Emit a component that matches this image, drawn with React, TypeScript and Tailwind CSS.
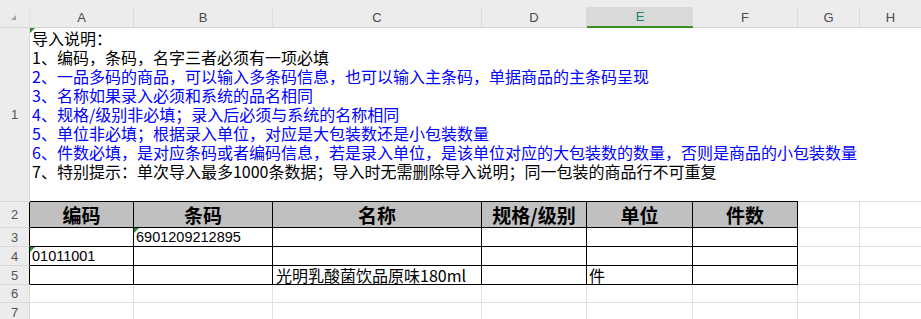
import React from "react";

const COLS = "grid grid-cols-[30px_104px_139px_209px_105px_106px_105px_62px_62px]";
const CJK = "font-['Noto_Sans_CJK_SC',sans-serif]";

function Tri() {
  return (
    <span className="absolute left-0 top-0 h-0 w-0 border-t-[5px] border-r-[5px] border-t-[#2b8a2b] border-r-transparent" />
  );
}

type C = { t?: React.ReactNode; table?: boolean; cls?: string; tri?: boolean };

function Row({
  num,
  h,
  cells,
  blackHead,
}: {
  num: number;
  h: string;
  cells: C[];
  blackHead?: boolean;
}) {
  return (
    <div className={`${COLS} ${h} grid-rows-1`}>
      <div
        className={`flex min-h-0 items-center justify-center bg-[#ececec] border-b border-r border-b-[#d9d9d9] text-[13px] leading-none text-[#555] ${
          blackHead ? "border-r-black" : "border-r-[#d9d9d9]"
        }`}
      >
        {num}
      </div>
      {cells.map((c, i) => (
        <div
          key={i}
          className={`relative flex min-h-0 items-center whitespace-nowrap leading-none border-r border-b ${
            c.table ? "border-r-black border-b-black" : "border-r-[#e1e1e1] border-b-[#e1e1e1]"
          } ${c.cls ?? ""}`}
        >
          {c.tri && <Tri />}
          {c.t}
        </div>
      ))}
    </div>
  );
}

const lines: { t: string; blue?: boolean }[] = [
  { t: "导入说明：" },
  { t: "1、编码，条码，名字三者必须有一项必填" },
  { t: "2、一品多码的商品，可以输入多条码信息，也可以输入主条码，单据商品的主条码呈现", blue: true },
  { t: "3、名称如果录入必须和系统的品名相同", blue: true },
  { t: "4、规格/级别非必填；录入后必须与系统的名称相同", blue: true },
  { t: "5、单位非必填；根据录入单位，对应是大包装数还是小包装数量", blue: true },
  { t: "6、件数必填，是对应条码或者编码信息，若是录入单位，是该单位对应的大包装数的数量，否则是商品的小包装数量", blue: true },
  { t: "7、特别提示：单次导入最多1000条数据；导入时无需删除导入说明；同一包装的商品行不可重复" },
];

export default function App() {
  const letters = ["A", "B", "C", "D", "E", "F", "G", "H"];
  const empty = (n: number, table: boolean): C[] => Array.from({ length: n }, () => ({ table }));
  const hdr = (t: string): C => ({
    t,
    table: true,
    cls: `justify-center bg-[#c0c0c0] text-[19px] font-bold text-black ${CJK}`,
  });
  return (
    <div className="h-[319px] w-[921px] overflow-hidden bg-white font-['Liberation_Sans',sans-serif]">
      <div className="h-[7px] bg-[#ececec]" />
      <div className={`${COLS} h-[21px] bg-[#ececec]`}>
        <div className="relative border-b border-r border-b-[#d3d3d3] border-r-[#e3e3e3]">
          <span className="absolute left-[11px] top-[8px] h-0 w-0 border-b-[5px] border-l-[5px] border-b-[#a6a6a6] border-l-transparent" />
        </div>
        {letters.map((l) =>
          l === "E" ? (
            <div
              key={l}
              className="flex items-center justify-center border-b-2 border-b-[#3b8f24] bg-[#d9d9d9] text-[13px] leading-none text-[#1d7f70]"
            >
              {l}
            </div>
          ) : (
            <div
              key={l}
              className="flex items-center justify-center border-b border-r border-b-[#d3d3d3] border-r-[#d9d9d9] text-[13px] leading-none text-[#4a4a4a]"
            >
              {l}
            </div>
          )
        )}
      </div>
      <div className={`${COLS} h-[174px] grid-rows-[173px_1px]`}>
        <div className="row-span-2 flex items-center justify-center border-b border-r border-[#d9d9d9] bg-[#ececec] text-[13px] leading-none text-[#555]">
          1
        </div>
        <div className={`relative col-span-8 whitespace-nowrap pl-[2px] pt-[1px] text-[16px] leading-[19px] ${CJK}`}>
          <Tri />
          {lines.map((l, i) => (
            <div key={i} className={`h-[19px] ${l.blue ? "text-[#0000ff]" : "text-black"}`}>
              {l.t}
            </div>
          ))}
        </div>
        <div className="col-span-6 bg-black" />
        <div className="col-span-2 bg-[#e1e1e1]" />
      </div>
      <Row
        num={2}
        h="h-[26px]"
        blackHead
        cells={[hdr("编码"), hdr("条码"), hdr("名称"), hdr("规格/级别"), hdr("单位"), hdr("件数"), ...empty(2, false)]}
      />
      <Row
        num={3}
        h="h-[19px]"
        blackHead
        cells={[
          { table: true },
          { table: true, tri: true, t: "6901209212895", cls: "pl-[2px] pt-[1px] text-[14.5px] text-black" },
          ...empty(4, true),
          ...empty(2, false),
        ]}
      />
      <Row
        num={4}
        h="h-[19px]"
        blackHead
        cells={[
          { table: true, tri: true, t: "01011001", cls: "pl-[2px] pt-[1px] text-[14.5px] text-black" },
          ...empty(5, true),
          ...empty(2, false),
        ]}
      />
      <Row
        num={5}
        h="h-[19px]"
        blackHead
        cells={[
          { table: true },
          { table: true },
          { table: true, t: "光明乳酸菌饮品原味180ml", cls: `pl-[3px] text-[16px] text-black ${CJK}` },
          { table: true },
          { table: true, t: "件", cls: `pl-[2px] text-[16px] text-black ${CJK}` },
          { table: true },
          ...empty(2, false),
        ]}
      />
      <Row num={6} h="h-[18px]" cells={empty(8, false)} />
      <Row num={7} h="h-[19px]" cells={empty(8, false)} />
    </div>
  );
}
